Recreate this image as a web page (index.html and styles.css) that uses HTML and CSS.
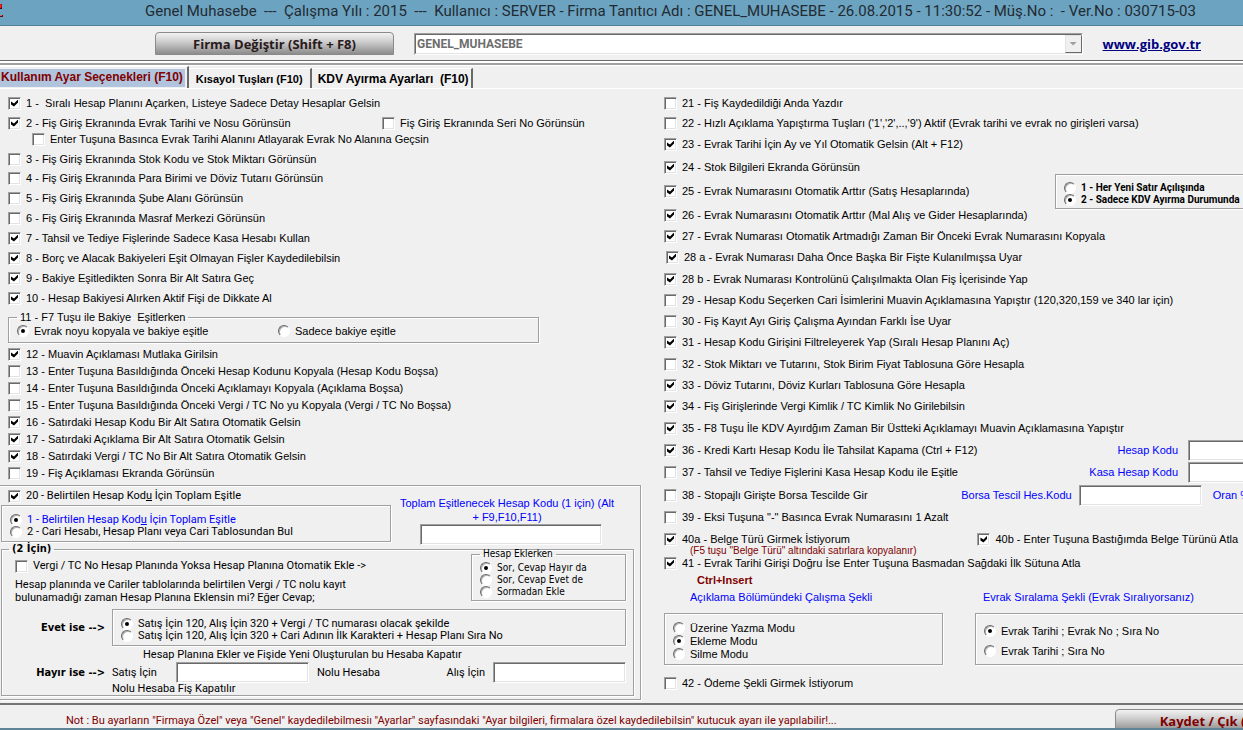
FILE: index.html
```html
<!DOCTYPE html>
<html lang="tr">
<head>
<meta charset="utf-8">
<title>Genel Muhasebe</title>
<link rel="stylesheet" href="styles.css">
</head>
<body>
<header class="titlebar">
  <svg class="app-icon" width="5" height="20" viewBox="0 0 5 20" aria-hidden="true"><path d="M0 1h2v5H0z" fill="#301010"/><path d="M0 1h1l1 2-1 2H0z" fill="#ff1a1a"/><path d="M0 13l1-1h2v2H0z" fill="#501010"/><path d="M0 12h2v1H0z" fill="#e06060"/></svg>
  <h1 class="title">Genel Muhasebe&nbsp; ---&nbsp; Çalışma Yılı : 2015&nbsp; ---&nbsp; Kullanıcı : SERVER - Firma Tanıtıcı Adı : GENEL_MUHASEBE - 26.08.2015 - 11:30:52 - Müş.No :&nbsp; - Ver.No : 030715-03</h1>
</header>

<div class="toolbar">
  <button class="push" type="button">Firma Değiştir (Shift + F8)</button>
  <div class="combo">
    <select class="combo-select" aria-label="Firma" disabled><option>GENEL_MUHASEBE</option></select>
    <span class="combo-arrow"></span>
  </div>
  <a class="site" href="#">www.gib.gov.tr</a>
</div>

<nav class="tabs">
  <button class="tab active" type="button">Kullanım Ayar Seçenekleri (F10)</button>
  <button class="tab small" type="button">Kısayol Tuşları (F10)</button>
  <button class="tab" type="button">KDV Ayırma Ayarları&nbsp; (F10)</button>
</nav>

<main class="panel">
  <section class="col left">
    <div class="list">
      <label class="opt"><input type="checkbox" checked>1 -&nbsp; Sıralı Hesap Planını Açarken, Listeye Sadece Detay Hesaplar Gelsin</label>
      <div class="split gap-6">
        <label class="opt"><input type="checkbox" checked>2 - Fiş Giriş Ekranında Evrak Tarihi ve Nosu Görünsün</label>
        <label class="opt"><input type="checkbox">Fiş Giriş Ekranında Seri No Görünsün</label>
      </div>
      <label class="opt sub"><input type="checkbox">Enter Tuşuna Basınca Evrak Tarihi Alanını Atlayarak Evrak No Alanına Geçsin</label>
      <label class="opt gap-6"><input type="checkbox">3 - Fiş Giriş Ekranında Stok Kodu ve Stok Miktarı Görünsün</label>
      <label class="opt gap-5"><input type="checkbox">4 - Fiş Giriş Ekranında Para Birimi ve Döviz Tutarıı Görünsün</label>
      <label class="opt gap-6"><input type="checkbox">5 - Fiş Giriş Ekranında Şube Alanı Görünsün</label>
      <label class="opt gap-6"><input type="checkbox">6 - Fiş Giriş Ekranında Masraf Merkezi Görünsün</label>
      <label class="opt gap-6"><input type="checkbox" checked>7 - Tahsil ve Tediye Fişlerinde Sadece Kasa Hesabı Kullan</label>
      <label class="opt gap-6"><input type="checkbox" checked>8 - Borç ve Alacak Bakiyeleri Eşit Olmayan Fişler Kaydedilebilsin</label>
      <label class="opt gap-6"><input type="checkbox" checked>9 - Bakiye Eşitledikten Sonra Bir Alt Satıra Geç</label>
      <label class="opt gap-6"><input type="checkbox" checked>10 - Hesap Bakiyesi Alırken Aktif Fişi de Dikkate Al</label>
      <fieldset class="box balance">
        <legend>11 - F7 Tuşu ile Bakiye&nbsp; Eşitlerken</legend>
        <div class="halves">
          <label class="opt"><input type="radio" name="balance" checked>Evrak noyu kopyala ve bakiye eşitle</label>
          <label class="opt"><input type="radio" name="balance">Sadece bakiye eşitle</label>
        </div>
      </fieldset>
      <label class="opt gap-4"><input type="checkbox" checked>12 - Muavin Açıklaması Mutlaka Girilsin</label>
      <label class="opt gap-3"><input type="checkbox">13 - Enter Tuşuna Basıldığında Önceki Hesap Kodunu Kopyala (Hesap Kodu Boşsa)</label>
      <label class="opt gap-3"><input type="checkbox">14 - Enter Tuşuna Basıldığında Önceki Açıklamayı Kopyala (Açıklama Boşsa)</label>
      <label class="opt gap-3"><input type="checkbox">15 - Enter Tuşuna Basıldığında Önceki Vergi / TC No yu Kopyala (Vergi / TC No Boşsa)</label>
      <label class="opt gap-3"><input type="checkbox" checked>16 - Satırdaki Hesap Kodu Bir Alt Satıra Otomatik Gelsin</label>
      <label class="opt gap-3"><input type="checkbox" checked>17 - Satırdaki Açıklama Bir Alt Satıra Otomatik Gelsin</label>
      <label class="opt gap-3"><input type="checkbox" checked>18 - Satırdaki Vergi / TC No Bir Alt Satıra Otomatik Gelsin</label>
      <label class="opt gap-3"><input type="checkbox">19 - Fiş Açıklaması Ekranda Görünsün</label>
    </div>

    <div class="totals">
      <div class="totals-top">
        <div class="totals-mode">
          <label class="opt indent"><input type="checkbox" checked><span>20 - Belirtilen Hesap Kod<u>u</u> İçin Toplam Eşitle</span></label>
          <div class="box mode-box">
            <label class="opt tight blue"><input type="radio" name="mode" checked><span>1 - Belirtilen Hesap Kod<u>u</u> İçin Toplam Eşitle</span></label>
            <label class="opt tight"><input type="radio" name="mode">2 - Cari Hesabı, Hesap Planı veya Cari Tablosundan Bul</label>
          </div>
        </div>
        <div class="code">
          <label class="code-label" for="total-code">Toplam Eşitlenecek Hesap Kodu (1 için) (Alt + F9,F10,F11)</label>
          <input class="field code-field" id="total-code" type="text">
        </div>
      </div>

      <fieldset class="box second">
        <legend class="strong">(2 İçin)</legend>
        <div class="second-top">
          <div class="second-text">
            <label class="opt"><input type="checkbox">Vergi / TC No Hesap Planında Yoksa Hesap Planına Otomatik Ekle -&gt;</label>
            <p class="question">Hesap planında ve Cariler tablolarında belirtilen Vergi / TC nolu kayıt<br>bulunamadığı zaman Hesap Planına Eklensin mi? Eğer Cevap;</p>
          </div>
          <fieldset class="box ask">
            <legend>Hesap Eklerken</legend>
            <label class="opt tight"><input type="radio" name="ask" checked>Sor, Cevap Hayır da</label>
            <label class="opt tight"><input type="radio" name="ask">Sor, Cevap Evet de</label>
            <label class="opt tight"><input type="radio" name="ask">Sormadan Ekle</label>
          </fieldset>
        </div>
        <div class="answers">
          <strong class="answer">Evet ise --&gt;</strong>
          <div class="box yes-box">
            <label class="opt tight"><input type="radio" name="yes" checked>Satış İçin 120, Alış İçin 320 + Vergi / TC numarası olacak şekilde</label>
            <label class="opt tight"><input type="radio" name="yes">Satış İçin 120, Alış İçin 320 + Cari Adının İlk Karakteri + Hesap Planı Sıra No</label>
          </div>
          <p class="yes-note">Hesap Planına Ekler ve Fişide Yeni Oluşturulan bu Hesaba Kapatır</p>
          <strong class="answer">Hayır ise --&gt;</strong>
          <div class="no-row">
            <label class="sale" for="sale">Satış İçin</label>
            <input class="field no-field" id="sale" type="text">
            <span>Nolu Hesaba</span>
            <label class="buy" for="buy">Alış İçin</label>
            <input class="field no-field" id="buy" type="text">
          </div>
          <p class="no-note">Nolu Hesaba Fiş Kapatılır</p>
        </div>
      </fieldset>
    </div>
  </section>

  <section class="col right">
    <label class="opt"><input type="checkbox">21 - Fiş Kaydedildiği Anda Yazdır</label>
    <label class="opt gap-6"><input type="checkbox">22 - Hızlı Açıklama Yapıştırma Tuşları ('1','2',..,'9') Aktif (Evrak tarihi ve evrak no girişleri varsa)</label>
    <label class="opt gap-7"><input type="checkbox" checked>23 - Evrak Tarihi İçin Ay ve Yıl Otomatik Gelsin (Alt + F12)</label>
    <div class="numbering gap-9">
      <div class="numbering-list">
        <label class="opt"><input type="checkbox" checked>24 - Stok Bilgileri Ekranda Görünsün</label>
        <label class="opt gap-10"><input type="checkbox" checked>25 - Evrak Numarasını Otomatik Arttır (Satış Hesaplarında)</label>
        <label class="opt gap-10"><input type="checkbox" checked>26 - Evrak Numarasını Otomatik Arttır (Mal Alış ve Gider Hesaplarında)</label>
      </div>
      <div class="box when-box">
        <label class="opt tight"><input type="radio" name="when">1 - Her Yeni Satır Açılışında</label>
        <label class="opt tight"><input type="radio" name="when" checked>2 - Sadece KDV Ayırma Durumunda</label>
      </div>
    </div>
    <label class="opt gap-7"><input type="checkbox" checked>27 - Evrak Numarası Otomatik Artmadığı Zaman Bir Önceki Evrak Numarasını Kopyala</label>
    <label class="opt gap-7 nudge"><input type="checkbox" checked>28 a - Evrak Numarası Daha Önce Başka Bir Fişte Kulanılmışsa Uyar</label>
    <label class="opt gap-8"><input type="checkbox" checked>28 b - Evrak Numarası Kontrolünü Çalışılmakta Olan Fiş İçerisinde Yap</label>
    <label class="opt gap-7"><input type="checkbox">29 - Hesap Kodu Seçerken Cari İsimlerini Muavin Açıklamasına Yapıştır (120,320,159 ve 340 lar için)</label>
    <label class="opt gap-7"><input type="checkbox">30 - Fiş Kayıt Ayı Giriş Çalışma Ayından Farklı İse Uyar</label>
    <label class="opt gap-7"><input type="checkbox" checked>31 - Hesap Kodu Girişini Filtreleyerek Yap (Sıralı Hesap Planını Aç)</label>
    <label class="opt gap-8"><input type="checkbox">32 - Stok Miktarı ve Tutarını, Stok Birim Fiyat Tablosuna Göre Hesapla</label>
    <label class="opt gap-7"><input type="checkbox" checked>33 - Döviz Tutarını, Döviz Kurları Tablosuna Göre Hesapla</label>
    <label class="opt gap-7"><input type="checkbox" checked>34 - Fiş Girişlerinde Vergi Kimlik / TC Kimlik No Girilebilsin</label>
    <label class="opt gap-8"><input type="checkbox" checked>35 - F8 Tuşu İle KDV Ayırdğım Zaman Bir Üstteki Açıklamayı Muavin Açıklamasına Yapıştır</label>
    <div class="pair gap-8">
      <label class="opt"><input type="checkbox" checked>36 - Kredi Kartı Hesap Kodu İle Tahsilat Kapama (Ctrl + F12)</label>
      <div class="entry wide"><label class="blue" for="card-code">Hesap Kodu</label><input class="field edge-field" id="card-code" type="text"></div>
    </div>
    <div class="pair gap-8">
      <label class="opt"><input type="checkbox">37 - Tahsil ve Tediye Fişlerini Kasa Hesap Kodu ile Eşitle</label>
      <div class="entry wide"><label class="blue" for="cash-code">Kasa Hesap Kodu</label><input class="field edge-field" id="cash-code" type="text"></div>
    </div>
    <div class="pair gap-9">
      <label class="opt"><input type="checkbox">38 - Stopajlı Girişte Borsa Tescilde Gir</label>
      <div class="entry"><label class="blue" for="exchange-code">Borsa Tescil Hes.Kodu</label><input class="field exchange-field" id="exchange-code" type="text"><span class="blue rate">Oran %</span></div>
    </div>
    <label class="opt gap-8"><input type="checkbox">39 - Eksi Tuşuna "-" Basınca Evrak Numarasını 1 Azalt</label>
    <div class="pair gap-8">
      <label class="opt"><input type="checkbox" checked>40a - Belge Türü Girmek İstiyorum</label>
      <label class="opt second-opt"><input type="checkbox" checked>40b - Enter Tuşuna Bastığımda Belge Türünü Atla</label>
    </div>
    <p class="hint">(F5 tuşu "Belge Türü" altındaki satırlara kopyalanır)</p>
    <label class="opt"><input type="checkbox" checked>41 - Evrak Tarihi Girişi Doğru İse Enter Tuşuna Basmadan Sağdaki İlk Sütuna Atla</label>
    <strong class="shortcut">Ctrl+Insert</strong>
    <div class="modes">
      <div class="mode">
        <p class="mode-title blue">Açıklama Bölümündeki Çalışma Şekli</p>
        <div class="box text-box">
          <label class="opt"><input type="radio" name="text">Üzerine Yazma Modu</label>
          <label class="opt"><input type="radio" name="text" checked>Ekleme Modu</label>
          <label class="opt"><input type="radio" name="text">Silme Modu</label>
        </div>
      </div>
      <div class="mode last">
        <p class="mode-title blue">Evrak Sıralama Şekli (Evrak Sıralıyorsanız)</p>
        <div class="box order-box">
          <label class="opt"><input type="radio" name="order" checked>Evrak Tarihi ; Evrak No ; Sıra No</label>
          <label class="opt"><input type="radio" name="order">Evrak Tarihi ; Sıra No</label>
        </div>
      </div>
    </div>
    <label class="opt payment"><input type="checkbox">42 - Ödeme Şekli Girmek İstiyorum</label>
  </section>
</main>

<footer class="footer">
  <p class="note">Not : Bu ayarların "Firmaya Özel" veya "Genel" kaydedilebilmesiı "Ayarlar" sayfasındaki "Ayar bilgileri, firmalara özel kaydedilebilsin" kutucuk ayarı ile yapılabilir!...</p>
  <button class="push save" type="button">Kaydet / Çık (F2)</button>
</footer>
</body>
</html>
```
FILE: styles.css
```css
* { box-sizing: border-box; }

body {
  margin: 0;
  min-height: 100vh;
  display: flex;
  flex-direction: column;
  overflow-x: hidden;
  background: #f0f0f0;
  color: #000;
  font: 11px/14px "Liberation Sans", Arial, sans-serif;
}

p, h1 { margin: 0; }
fieldset { margin: 0; min-width: 0; }
legend { padding: 0 3px; line-height: 12px; }
.blue { color: #0000ff; }

/* Title bar */
.titlebar {
  display: flex;
  align-items: center;
  height: 26px;
  background: #6ca3c0;
  border-bottom: 1px solid #4f8199;
}
.app-icon { flex: none; }
.title {
  flex: 1;
  padding: 0 20px 4px 140px;
  color: #222b33;
  font: 400 15px/20px Roboto, sans-serif;
  white-space: nowrap;
}

/* Toolbar */
.toolbar {
  display: flex;
  align-items: center;
  height: 39px;
  padding: 0 42px 2px 155px;
  border-bottom: 2px solid #a0a0a0;
  background: linear-gradient(#696969, #696969) 0 34px / 100% 1px no-repeat, linear-gradient(#fff, #fff) 0 35px / 100% 2px no-repeat;
}
.push {
  width: 239px;
  height: 23px;
  padding: 0;
  border: 1px solid #8a8a8a;
  border-radius: 4px 4px 0 0;
  background: linear-gradient(#f2f2f2, #cfcfcf 40%, #8c8c8c);
  color: #2a1a1c;
  font: 700 13px/18px "Open Sans", sans-serif;
}
.combo {
  position: relative;
  flex: 1;
  height: 22px;
  margin-left: 20px;
  border: 1px solid;
  border-color: #a0a0a0 #fff #fff #a0a0a0;
}
.combo-select {
  display: block;
  width: 100%;
  height: 20px;
  padding: 0 1px;
  appearance: none;
  border: 1px solid;
  border-color: #696969 #e3e3e3 #e3e3e3 #696969;
  border-radius: 0;
  background: #fff;
  color: #6d6d6d;
  opacity: 1;
  font: 700 12px/18px Roboto, sans-serif;
}
.combo-arrow {
  position: absolute;
  top: 1px;
  right: 0;
  width: 17px;
  height: 18px;
  border: 1px solid;
  border-color: #e3e3e3 #696969 #696969 #e3e3e3;
  background: #f0f0f0;
}
.combo-arrow::before {
  content: "";
  display: block;
  width: 8px;
  height: 4px;
  margin: 6px auto 0;
  background: #a0a0a0;
  clip-path: polygon(0 0, 100% 0, 50% 100%);
}
.site {
  margin-left: 20px;
  color: #000080;
  font: 700 13px/16px "Open Sans", sans-serif;
}

/* Tabs */
.tabs {
  display: flex;
  align-items: stretch;
  height: 24px;
  border-top: 1px solid #fff;
  border-bottom: 1px solid #fff;
}
.tab {
  margin: 2px 0 0;
  padding: 1px 2px 0 6px;
  border: 0;
  border-top: 1px solid #fff;
  border-right: 2px solid #696969;
  background: none;
  color: #000;
  font: 700 12px/16px "Liberation Sans", Arial, sans-serif;
  white-space: nowrap;
}
.tab.small { padding: 1px 7px 0 7px; font-size: 11px; }
.tab.active {
  margin-top: 0;
  padding: 0 4px 2px 1px;
  background: linear-gradient(#b0c4de, #b0c4de) 0 2px / calc(100% - 2px) 18px no-repeat;
  color: #800000;
}

/* Options */
.panel {
  flex: 1;
  display: grid;
  grid-template-columns: 656fr 587fr;
}
.col { display: flex; flex-direction: column; min-width: 0; padding-top: 7px; }
.opt {
  display: flex;
  align-items: center;
  gap: 5px;
  height: 14px;
  white-space: nowrap;
}
.tight { height: 12px; line-height: 12px; }
.gap-3 { margin-top: 3px; }
.gap-4 { margin-top: 4px; }
.gap-5 { margin-top: 5px; }
.gap-6 { margin-top: 6px; }
.gap-7 { margin-top: 7px; }
.gap-8 { margin-top: 8px; }
.gap-9 { margin-top: 9px; }
.gap-10 { margin-top: 10px; }

input { margin: 0; }
input[type="checkbox"] {
  flex: none;
  width: 13px;
  height: 13px;
  appearance: none;
  border: 1px solid;
  border-color: #a0a0a0 #fff #fff #a0a0a0;
  background: #fff;
  box-shadow: inset 1px 1px #696969, inset -1px -1px #e3e3e3;
}
input[type="checkbox"]:checked::before {
  content: "";
  display: block;
  width: 7px;
  height: 7px;
  margin: 2px;
  background: #000;
  clip-path: polygon(0 2px, 3px 4px, 7px 0, 7px 3px, 3px 7px, 0 5px);
}
input[type="radio"] {
  flex: none;
  width: 12px;
  height: 12px;
  appearance: none;
  border: 1px solid;
  border-color: #696969 #fff #fff #696969;
  border-radius: 50%;
  background: #fff;
  box-shadow: inset 1px 1px #b0b0b0;
}
input[type="radio"]:checked::before {
  content: "";
  display: block;
  width: 4px;
  height: 4px;
  margin: 3px;
  border-radius: 50%;
  background: #000;
}
.field {
  flex: none;
  height: 21px;
  padding: 0 3px;
  border: 1px solid;
  border-color: #a0a0a0 #fff #fff #a0a0a0;
  border-radius: 0;
  background: #fff;
  box-shadow: inset 1px 1px #696969, inset -1px -1px #e3e3e3;
  font: inherit;
}
.box {
  border: 1px solid #a0a0a0;
  box-shadow: 1px 1px #fff, inset 1px 1px #fff;
}

/* Left column */
.list { padding-left: 8px; }
.split { display: grid; grid-template-columns: 374px 1fr; }
.sub { margin: 2px 0 0 24px; }
.balance { width: 531px; margin-top: 6px; padding: 1px 8px 4px; }
.balance .halves { display: grid; grid-template-columns: 261px 1fr; }

.totals {
  width: 641px;
  margin-top: 5px;
  padding: 3px 6px 3px 1px;
  border: 1px solid #a0a0a0;
  border-left: 0;
  box-shadow: 1px 1px #fff, inset 0 1px #fff;
  font-family: Roboto, "Noto Sans", sans-serif;
}
.totals-top { display: grid; grid-template-columns: 390px 1fr; gap: 6px; }
.indent { margin-left: 7px; }
.mode-box { margin-top: 2px; padding: 8px 8px 4px; height: 37px; }
.code {
  display: flex;
  flex-direction: column;
  align-items: center;
  padding: 7px 17px 0 0;
  font-family: "Liberation Sans", Arial, sans-serif;
}
.code-label { width: 220px; color: #0000ff; text-align: center; }
.code-field { width: 182px; margin-left: 8px; }
.second { margin-top: -2px; padding: 2px 7px 0 13px; }
.second legend { margin-left: -6px; }
.second .ask legend { margin-left: 0; }
.strong, .answer { font-family: "DejaVu Sans Condensed", "Noto Sans", sans-serif; font-weight: 700; }
.second-top { display: flex; justify-content: space-between; align-items: flex-start; }
.second-text { padding-top: 2px; }
.question { margin-top: 5px; line-height: 13px; }
.ask { width: 155px; height: 53px; margin-top: -9px; padding: 2px 8px 0; font: 10px/12px "DejaVu Sans Condensed", "Noto Sans", sans-serif; }
.answers { display: grid; grid-template-columns: 97px 1fr; margin-top: 5px; }
.answer { align-self: center; padding-right: 7px; text-align: right; }
.yes-box { height: 37px; padding: 8px 8px 4px; }
.yes-note { grid-column: 2; margin: 2px 0 0 31px; }
.no-row { display: flex; align-items: center; height: 21px; }
.sale { width: 64px; }
.no-field { width: 133px; }
.no-row span { margin-left: 8px; }
.buy { margin: 0 8px 0 auto; }
.no-note { grid-column: 2; line-height: 12px; }

/* Right column */
.right { padding-left: 8px; overflow: hidden; }
.numbering { display: grid; grid-template-columns: 391px 1fr; align-items: center; }
.when-box { margin-right: -8px; padding: 7px 8px 2px; font: 700 10px/12px Roboto, sans-serif; }
.nudge { margin-left: 2px; }
.pair { display: flex; align-items: center; height: 14px; }
.entry { display: flex; align-items: center; gap: 7px; margin: 0 -7px 0 auto; white-space: nowrap; }
.entry.wide { gap: 10px; }
.edge-field { width: 62px; }
.exchange-field { width: 123px; }
.rate { margin-left: 4px; }
.second-opt { margin: 0 5px 0 auto; }
.hint { padding-left: 26px; color: #800000; font-size: 10px; line-height: 10px; }
.shortcut { margin: 3px 0 0 33px; color: #800000; }
.modes { display: grid; grid-template-columns: 279fr 268fr; gap: 32px; margin-top: 3px; }
.mode-title { margin-bottom: 9px; padding-left: 26px; }
.last .mode-title { padding-left: 8px; }
.text-box { display: grid; height: 52px; padding: 7px 8px 3px; }
.text-box .opt { height: 13px; }
.order-box { height: 52px; margin-right: -8px; padding: 10px 8px; }
.order-box .opt + .opt { margin-top: 6px; }
.payment { margin-top: 11px; }

/* Footer */
.footer {
  display: flex;
  align-items: flex-start;
  justify-content: space-between;
  height: 27px;
  overflow: hidden;
  border-top: 2px solid #757575;
  border-bottom: 2px solid #5f8397;
}
.note {
  padding: 9px 0 0 66px;
  color: #800000;
  font-family: Roboto, "Noto Sans", sans-serif;
  white-space: nowrap;
}
.save {
  flex: none;
  width: 194px;
  margin: 4px -66px 0 0;
  color: #800000;
}
```
